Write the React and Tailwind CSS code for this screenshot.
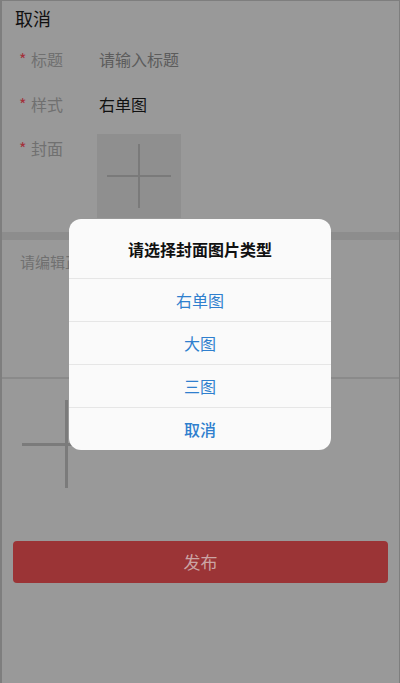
import React from 'react';

const font = { fontFamily: '"Noto Sans CJK SC", "Noto Sans", sans-serif' };

function Field({ label, children }) {
  return (
    <div className="flex items-center h-[45px]">
      <div className="w-[97px] flex items-center pl-[17px]">
        <span className="text-[#a3313b] text-[16px] w-[12px] leading-none">*</span>
        <span className="text-[#707070] text-[16px]">{label}</span>
      </div>
      <div className="text-[16px]">{children}</div>
    </div>
  );
}

export default function App() {
  return (
    <div
      className="relative h-[683px] w-[400px] overflow-hidden bg-[#999999] border-t border-l-2 border-r border-[#7e7e7e]"
      style={font}
    >
      {/* Top bar */}
      <div className="h-[35px] flex items-center pl-[13px] text-[18px] text-[#111]">取消</div>

      <Field label="标题">
        <span className="text-[#5c5c5c]">请输入标题</span>
      </Field>
      <Field label="样式">
        <span className="text-[#111]">右单图</span>
      </Field>

      {/* Cover */}
      <div className="flex h-[106px]">
        <div className="w-[95px] flex items-start pl-[17px] pt-[12px]">
          <span className="text-[#a3313b] text-[16px] w-[12px] leading-[20px]">*</span>
          <span className="text-[#707070] text-[16px] leading-[20px]">封面</span>
        </div>
        <div className="mt-[8px] w-[84px] h-[84px] bg-[#8f8f8f] flex items-center justify-center">
          <div className="relative w-[64px] h-[64px]">
            <div className="absolute left-[31px] top-0 w-[2px] h-[64px] bg-[#7a7a7a]" />
            <div className="absolute top-[31px] left-0 h-[2px] w-[64px] bg-[#7a7a7a]" />
          </div>
        </div>
      </div>

      <div className="h-[8px] bg-[#8d8d8d]" />

      {/* Content editor */}
      <div className="h-[137px] pl-[18px] pt-[11px] text-[15px] text-[#707070]">请编辑正文内容</div>
      <div className="h-[2px] bg-[#8a8a8a]" />

      <div className="pl-[20px] pt-[21px]">
        <div className="relative w-[88px] h-[88px]">
          <div className="absolute left-[43px] top-0 w-[3px] h-[88px] bg-[#7b7b7b]" />
          <div className="absolute top-[43px] left-0 h-[3px] w-[88px] bg-[#7b7b7b]" />
        </div>
      </div>

      {/* Publish button */}
      <div className="px-[11px] mt-[53px]">
        <div className="h-[42px] rounded-[4px] bg-[#9b3436] flex items-center justify-center text-[17px] text-[#cba4a4]">
          发布
        </div>
      </div>

      {/* Dialog */}
      <div className="absolute left-[67px] top-[218px] w-[262px] rounded-[12px] bg-[#fafafa] overflow-hidden">
        <div className="h-[59px] flex items-center justify-center text-[16px] font-semibold text-[#111]">
          请选择封面图片类型
        </div>
        {['右单图', '大图', '三图', '取消'].map((item, i) => (
          <div
            key={item}
            className={
              i === 3
                ? 'h-[43px] border-t border-[#e6e6e6] flex items-center justify-center text-[16px] font-medium text-[#2f7fce]'
                : 'h-[43px] border-t border-[#e6e6e6] flex items-center justify-center text-[16px] text-[#2f7fce]'
            }
          >
            {item}
          </div>
        ))}
      </div>
    </div>
  );
}
